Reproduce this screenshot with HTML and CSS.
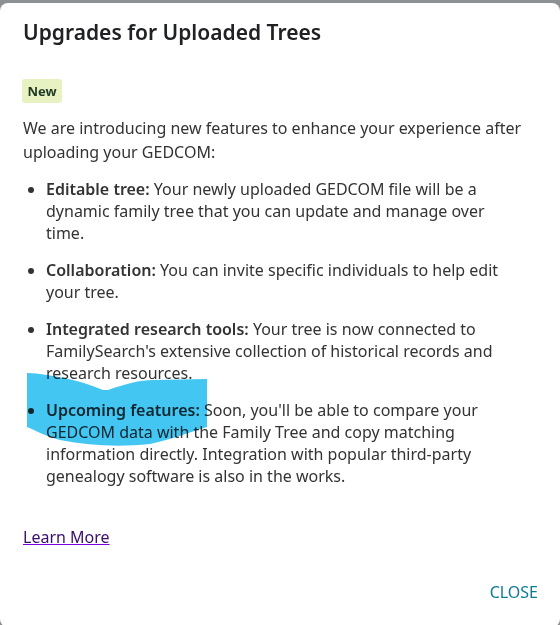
FILE: index.html
```html
<!DOCTYPE html>
<html lang="en">
<head>
    <meta charset="UTF-8">
    <meta name="viewport" content="width=device-width, initial-scale=1.0">
    <title>Upgrades for Uploaded Trees</title>
    <link rel="stylesheet" href="styles.css">
</head>
<body>
    <div class="dialog">
        <h1 class="dialog-title">Upgrades for Uploaded Trees</h1>
        <span class="badge">New</span>
        <p class="intro">We are introducing new features to enhance your experience after uploading your GEDCOM:</p>
        <ul class="features">
            <li><strong>Editable tree:</strong> Your newly uploaded GEDCOM file will be a dynamic family tree that you can update and manage over time.</li>
            <li><strong>Collaboration:</strong> You can invite specific individuals to help edit your tree.</li>
            <li><strong>Integrated research tools:</strong> Your tree is now connected to FamilySearch's extensive collection of historical records and research resources.</li>
            <li><strong>Upcoming features:</strong> Soon, you'll be able to compare your GEDCOM data with the Family Tree and copy matching information directly. Integration with popular third-party genealogy software is also in the works.</li>
        </ul>
        <a href="#" class="learn-more">Learn More</a>
        <div class="actions">
            <button class="close-btn">Close</button>
        </div>
    </div>

    <!-- highlighter scribble over the last bullet -->
    <svg class="scribble" width="560" height="625" viewBox="0 0 560 625">
        <path d="M27 373 C50 374 80 380 103 390 L108 390 C125 384 140 380 153 380 L207 379 L207 427 C190 432 170 440 150 444 C120 447 90 446 60 440 C45 436 35 430 27 427 Z" fill="#44c6f3"/>
    </svg>
</body>
</html>
```

FILE: styles.css
```css
body {
    font-family: 'Noto Sans', 'Open Sans', sans-serif;
    margin: 0;
    padding: 0;
    background-color: #8e9193;
    color: #333;
    overflow: hidden;
}
.dialog {
    margin-top: 3px;
    height: 624px;
    box-sizing: border-box;
    background-color: #fff;
    border-radius: 8px;
    padding: 15px 22px 0 23px;
}
.dialog-title {
    margin: 0;
    font-size: 21px;
    line-height: 28px;
    font-weight: 600;
    color: #202124;
}
.badge {
    display: inline-block;
    margin-top: 33px;
    margin-left: -1px;
    width: 40px;
    height: 24px;
    line-height: 24px;
    text-align: center;
    font-size: 13px;
    font-weight: 700;
    color: #1f3a24;
    background-color: #e8f1c2;
    border-radius: 3px;
}
.intro {
    margin: 13px 14px 0 0;
    font-size: 16px;
    line-height: 24px;
}
.features {
    margin: 14px 14px 0 0;
    padding-left: 23px;
    font-size: 16px;
    line-height: 22px;
}
.features li {
    margin-bottom: 15px;
}
.features li:last-child {
    margin-bottom: 0;
}
.features strong {
    font-weight: 600;
}
.learn-more {
    display: inline-block;
    margin-top: 38px;
    font-size: 16px;
    line-height: 24px;
    color: #3a0f6a;
    text-decoration: underline;
    text-decoration-color: #7a00df;
}
.actions {
    display: flex;
    justify-content: flex-end;
    margin-top: 31px;
}
.close-btn {
    border: none;
    background: none;
    padding: 0;
    font-family: inherit;
    font-size: 16px;
    line-height: 24px;
    text-transform: uppercase;
    color: #0b7a97;
    cursor: pointer;
}
.scribble {
    position: absolute;
    left: 0;
    top: 0;
    pointer-events: none;
    mix-blend-mode: multiply;
}
```
